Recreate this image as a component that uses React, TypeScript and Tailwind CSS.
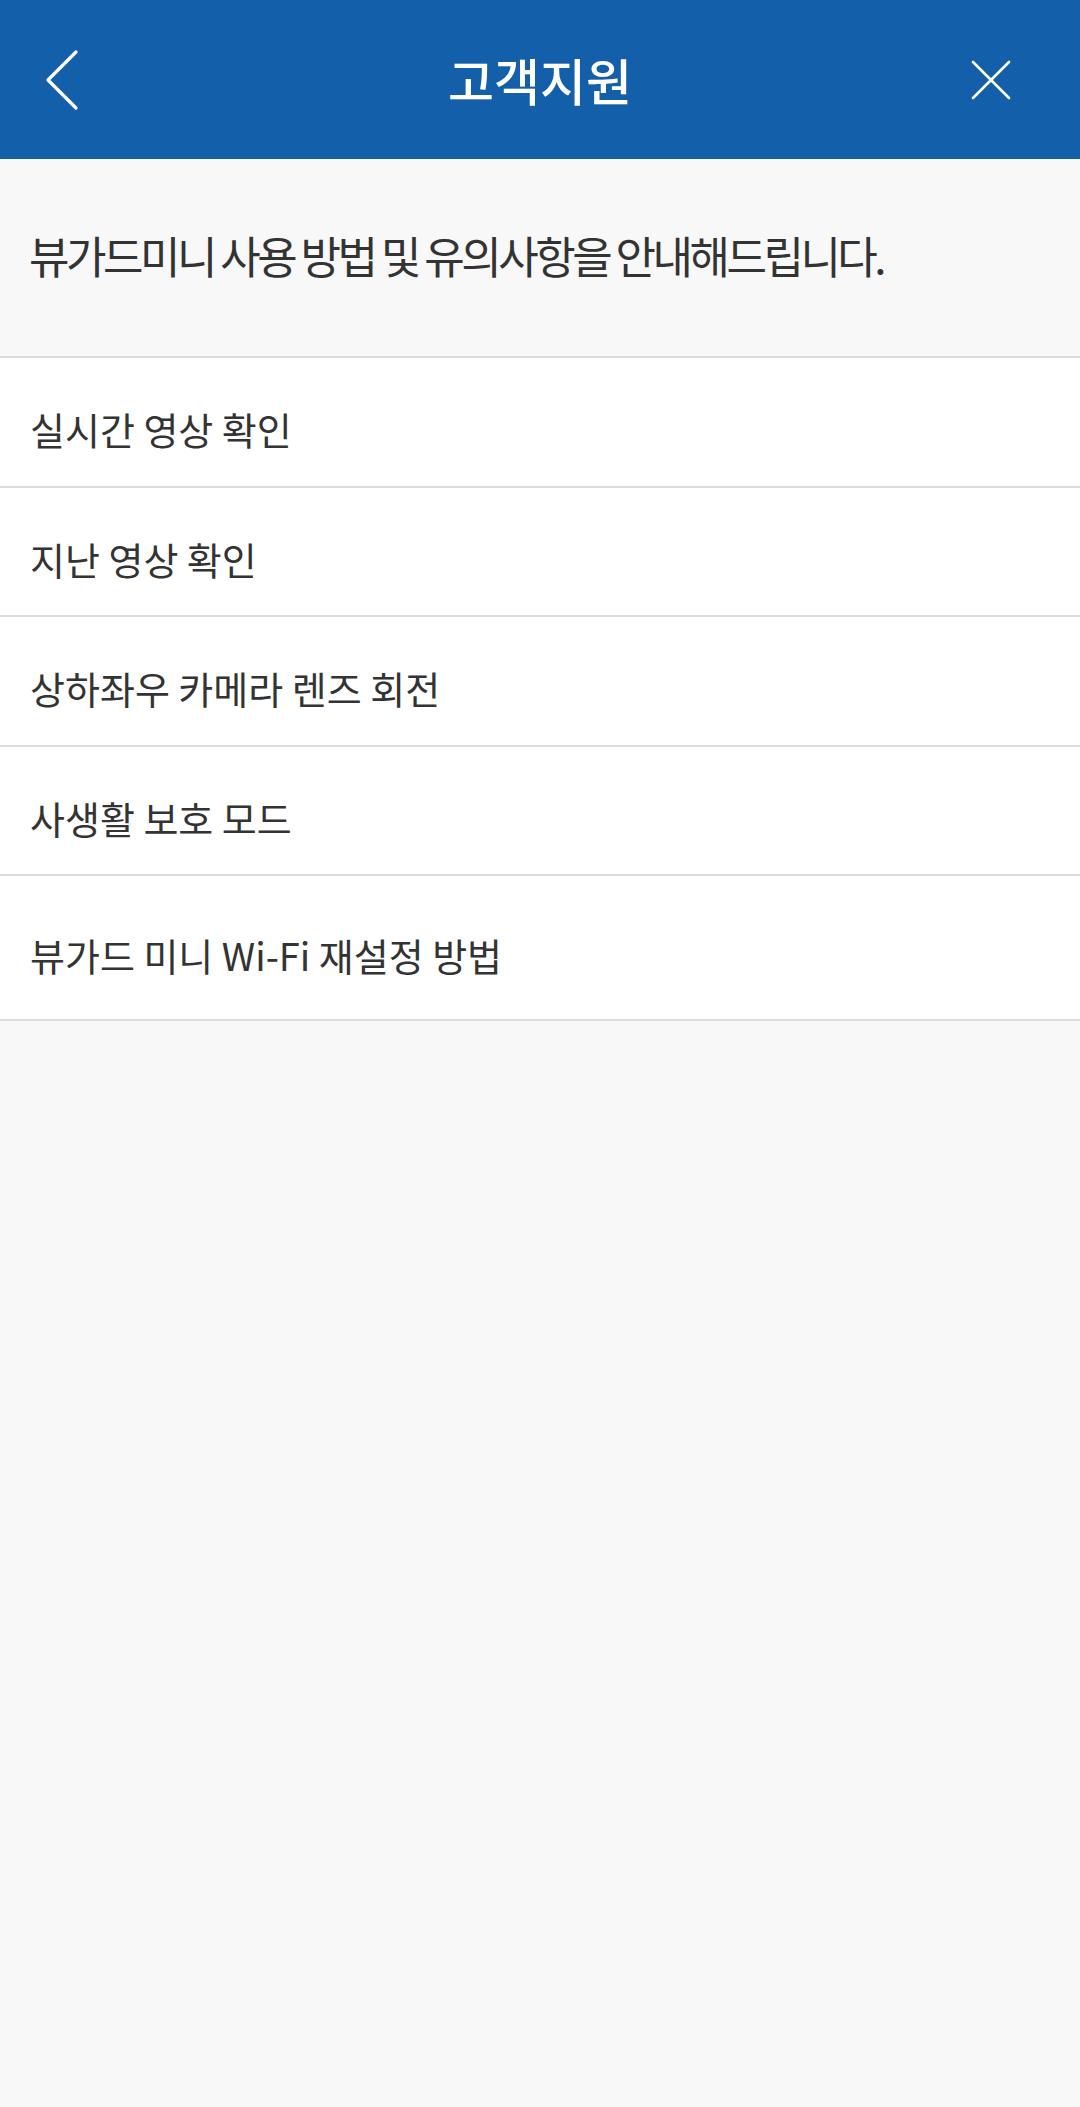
import React from "react";

const items = [
  "실시간 영상 확인",
  "지난 영상 확인",
  "상하좌우 카메라 렌즈 회전",
  "사생활 보호 모드",
  "뷰가드 미니 Wi-Fi 재설정 방법",
];

export default function App() {
  return (
    <div
      className="min-h-[2107px] w-[1080px] bg-[#f8f8f8]"
      style={{ fontFamily: '"Noto Sans CJK KR", "Noto Sans", sans-serif' }}
    >
      <header className="flex h-[159px] items-center justify-between bg-[#135fa9] shadow-[0_1px_0_#0e4f8f]">
        <div className="flex w-[120px] items-center pl-[44px]">
          <svg width="36" height="62" viewBox="0 0 36 62" fill="none">
            <path d="M32 3 L4 31 L32 59" stroke="white" strokeWidth="3.2" strokeLinecap="round" strokeLinejoin="round" />
          </svg>
        </div>
        <h1 className="pb-[2px] text-[50px] font-medium leading-none text-white">고객지원</h1>
        <div className="flex w-[120px] items-center justify-end pr-[68px]">
          <svg width="42" height="42" viewBox="0 0 42 42" fill="none">
            <path d="M3 3 L39 39 M39 3 L3 39" stroke="white" strokeWidth="2.6" strokeLinecap="round" />
          </svg>
        </div>
      </header>
      <div className="flex h-[199px] items-center border-b-2 border-[#dcdcdc] bg-[#f8f8f8] px-[29px] pb-[5px]">
        <p className="text-[44px] leading-none tracking-[-3.5px] text-[#333333]">
          뷰가드미니 사용 방법 및 유의사항을 안내해드립니다.
        </p>
      </div>
      <ul className="bg-white">
        {items.map((t, i) => (
          <li
            key={t}
            className={`flex items-center border-b-2 border-[#dcdcdc] px-[30px] pt-[15px] ${
              i === items.length - 1 ? "h-[145px]" : "h-[129.5px]"
            }`}
          >
            <span className="text-[38px] leading-none text-[#333333]">{t}</span>
          </li>
        ))}
      </ul>
    </div>
  );
}
